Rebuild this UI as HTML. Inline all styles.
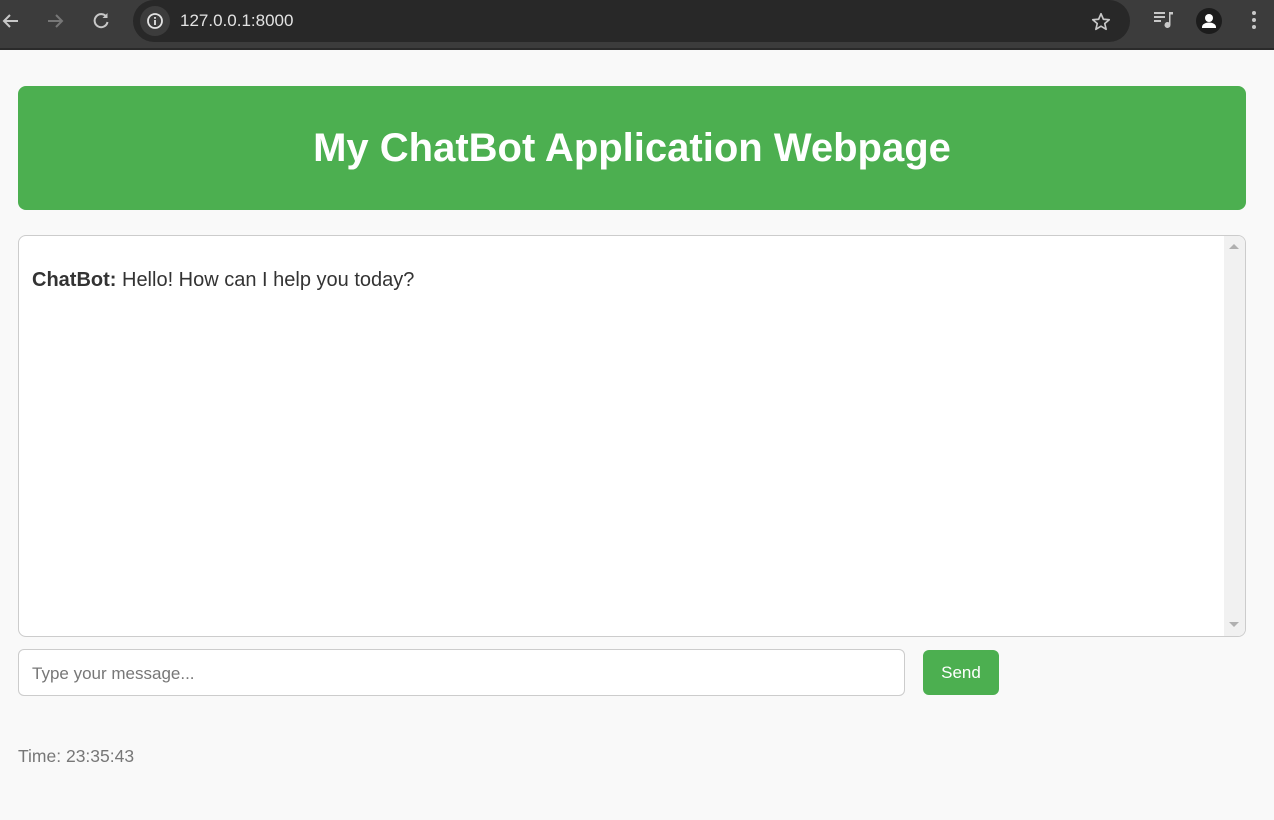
<!DOCTYPE html>
<html><head><meta charset="utf-8"><style>
*{box-sizing:border-box;margin:0;padding:0}
body{width:1274px;height:820px;background:#f9f9f9;font-family:"Liberation Sans",Arial,sans-serif;position:relative;overflow:hidden}
.bar{position:absolute;left:0;top:0;width:1274px;height:50px;background:#3c3c3c;border-bottom:2px solid #2a2a2a}
.omni{position:absolute;left:133px;top:0;width:997px;height:42px;background:#282828;border-radius:21px}
.info{position:absolute;left:140px;top:6px;width:30px;height:30px;border-radius:50%;background:#3c3c3c}
.url{position:absolute;left:180px;top:11px;color:#e3e3e3;font-size:17px}
.hdr{position:absolute;left:18px;top:86px;width:1228px;height:124px;background:#4caf50;border-radius:8px;color:#fff;font-weight:bold;font-size:40px;text-align:center;line-height:124px}
.chat{position:absolute;left:18px;top:235px;width:1228px;height:402px;background:#fff;border:1px solid #ccc;border-radius:8px;overflow:hidden}
.sb{position:absolute;right:0;top:0;width:21px;height:100%;background:#f1f1f1}
.msg{position:absolute;left:13px;top:33px;font-size:20px;color:#333}
.inp{position:absolute;left:18px;top:649px;width:887px;height:47px;border:1px solid #ccc;border-radius:6px;background:#fff;font-size:17px;color:#777;padding:14px 13px}
.send{position:absolute;left:923px;top:650px;width:76px;height:45px;background:#4caf50;border-radius:6px;color:#fff;font-size:17px;text-align:center;line-height:45px}
.time{position:absolute;left:18px;top:746px;color:#777;font-size:17.5px}
</style></head><body>
<div class="bar">
<svg style="position:absolute;left:0;top:10px" width="22" height="22" viewBox="0 0 22 22"><path d="M18 11H4M10 5l-6 6 6 6" stroke="#c8c8c8" stroke-width="2" fill="none"/></svg>
<svg style="position:absolute;left:45px;top:10px" width="22" height="22" viewBox="0 0 22 22"><path d="M3 11h14M11 5l6 6-6 6" stroke="#777" stroke-width="2" fill="none"/></svg>
<svg style="position:absolute;left:90px;top:10px" width="22" height="22" viewBox="0 0 22 22"><path d="M16.5 7A6.5 6.5 0 1 0 17.5 12" stroke="#c8c8c8" stroke-width="2" fill="none"/><path d="M17.5 3v5h-5z" fill="#c8c8c8"/></svg>
<div class="omni"></div><div class="info"></div>
<svg style="position:absolute;left:146px;top:12px" width="18" height="18" viewBox="0 0 18 18"><circle cx="9" cy="9" r="7" stroke="#e3e3e3" stroke-width="1.8" fill="none"/><rect x="8.1" y="8" width="1.8" height="5" fill="#e3e3e3"/><rect x="8.1" y="5" width="1.8" height="1.8" fill="#e3e3e3"/></svg>
<div class="url">127.0.0.1:8000</div>
<svg style="position:absolute;left:1090px;top:11px" width="22" height="22" viewBox="0 0 24 24"><path d="M12 3l2.6 6 6.4.5-4.9 4.2 1.5 6.3L12 16.6 6.4 20l1.5-6.3L3 9.5 9.4 9z" stroke="#c8c8c8" stroke-width="1.8" fill="none" stroke-linejoin="round"/></svg>
<svg style="position:absolute;left:1153px;top:10px" width="22" height="22" viewBox="0 0 22 22"><path d="M1 3h11M1 7h11M1 11h7" stroke="#c8c8c8" stroke-width="2"/><path d="M16 2h4v2.5h-2.5V15a3 3 0 1 1-1.5-2.6z" fill="#c8c8c8"/></svg>
<div style="position:absolute;left:1196px;top:8px;width:26px;height:26px;border-radius:50%;background:#1c1c1c"></div>
<svg style="position:absolute;left:1196px;top:8px" width="26" height="26" viewBox="0 0 26 26"><circle cx="13" cy="10" r="4" fill="#fff"/><path d="M6 19c0-3 4-4.5 7-4.5s7 1.5 7 4.5v1H6z" fill="#fff"/></svg>
<svg style="position:absolute;left:1249px;top:10px" width="10" height="22" viewBox="0 0 10 22"><circle cx="5" cy="3" r="2" fill="#c8c8c8"/><circle cx="5" cy="10" r="2" fill="#c8c8c8"/><circle cx="5" cy="17" r="2" fill="#c8c8c8"/></svg>
</div>
<div class="hdr">My ChatBot Application Webpage</div>
<div class="chat"><div class="msg"><b>ChatBot:</b> Hello! How can I help you today?</div>
<div class="sb"><svg style="position:absolute;left:5px;top:7px" width="10" height="8"><path d="M0 6L5 1 10 6z" fill="#b0b0b0"/></svg><svg style="position:absolute;left:5px;bottom:8px" width="10" height="8"><path d="M0 2L5 7 10 2z" fill="#b0b0b0"/></svg></div></div>
<div class="inp">Type your message...</div>
<div class="send">Send</div>
<div class="time">Time: 23:35:43</div>
</body></html>
